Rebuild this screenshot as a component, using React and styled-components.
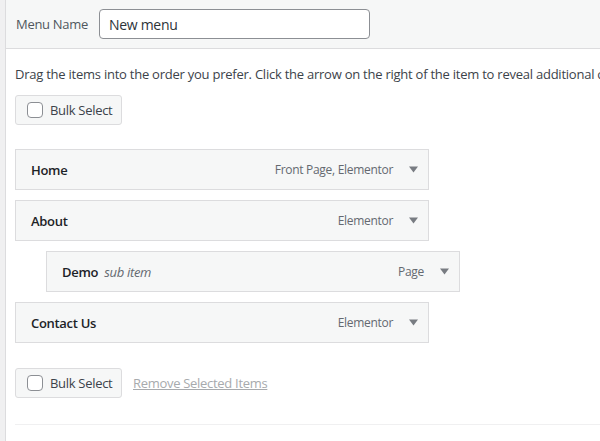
import React from "react";
import styled, { createGlobalStyle } from "styled-components";

const GlobalStyle = createGlobalStyle`
  html, body {
    margin: 0;
    padding: 0;
    background: #f0f0f1;
  }
  body {
    font-family: "Open Sans", "Noto Sans", sans-serif;
    font-size: 13px;
    color: #3c434a;
  }
`;

const Page = styled.div`
  display: flex;
  min-height: 441px;
  padding-left: 5px;
`;

const Panel = styled.div`
  flex: 1;
  background: #fff;
  border-left: 1px solid #dcdcde;
  overflow: hidden;
`;

const Header = styled.div`
  display: flex;
  align-items: center;
  height: 48px;
  padding: 0 10px;
  background: #f6f7f7;
  border-bottom: 1px solid #dcdcde;
`;

const Label = styled.label`
  color: #50575e;
  font-size: 13px;
  letter-spacing: -0.3px;
  margin-right: 11px;
`;

const NameInput = styled.input`
  box-sizing: border-box;
  width: 271px;
  height: 30px;
  padding: 0 9px;
  border: 1px solid #8c8f94;
  border-radius: 4px;
  background: #fff;
  font-family: inherit;
  font-size: 14px;
  letter-spacing: -0.3px;
  color: #2c3338;
  outline: none;
`;

const Body = styled.div`
  padding: 0 0 0 9px;
`;

const Hint = styled.p`
  margin: 15px 0 11px;
  line-height: 20px;
  white-space: nowrap;
  letter-spacing: -0.24px;
  color: #3c434a;
`;

const BulkRow = styled.div`
  display: flex;
  align-items: center;
  gap: 11px;
  margin-bottom: ${(p) => p.$after || 0}px;
`;

const BulkButton = styled.label`
  box-sizing: border-box;
  display: flex;
  align-items: center;
  gap: 7px;
  width: 107px;
  height: 30px;
  padding: 0 11px;
  background: #f6f7f7;
  border: 1px solid #dcdcde;
  border-radius: 3px;
  color: #3c434a;
  white-space: nowrap;
  letter-spacing: -0.3px;
`;

const Check = styled.span`
  box-sizing: border-box;
  width: 16px;
  height: 16px;
  border: 1px solid #8c8f94;
  border-radius: 4px;
  background: #fff;
  flex-shrink: 0;
`;

const RemoveLink = styled.span`
  color: #a7aaad;
  text-decoration: underline;
  white-space: nowrap;
  letter-spacing: -0.3px;
`;

const Items = styled.ul`
  list-style: none;
  margin: 0 0 25px;
  padding: 0;
  display: flex;
  flex-direction: column;
  gap: 10px;
`;

const ItemBar = styled.li`
  box-sizing: border-box;
  display: flex;
  align-items: center;
  width: 414px;
  height: 41px;
  margin-left: ${(p) => (p.$depth || 0) * 31}px;
  padding: 0 10px 0 15px;
  background: #f6f7f7;
  border: 1px solid #dcdcde;
`;

const Title = styled.span`
  font-weight: 600;
  color: #1d2327;
  letter-spacing: -0.3px;
`;

const SubLabel = styled.span`
  margin-left: 6px;
  font-style: italic;
  color: #646970;
  letter-spacing: -0.3px;
`;

const ItemType = styled.span`
  margin-left: auto;
  color: #646970;
  font-size: 12px;
  letter-spacing: -0.3px;
`;

const Toggle = styled.span`
  display: flex;
  align-items: center;
  margin-left: 16px;
  color: #787c82;
`;

const Footer = styled.div`
  margin-top: 26px;
  height: 20px;
  border-top: 1px solid #f0f0f1;
`;

const Arrow = () => (
  <svg width="9" height="7" viewBox="0 0 9 7">
    <polygon points="0,0.5 9,0.5 4.5,6.5" fill="currentColor" />
  </svg>
);

const items = [
  { title: "Home", type: "Front Page, Elementor" },
  { title: "About", type: "Elementor" },
  { title: "Demo", type: "Page", depth: 1, sub: "sub item" },
  { title: "Contact Us", type: "Elementor" },
];

const Bulk = () => (
  <BulkButton>
    <Check />
    Bulk Select
  </BulkButton>
);

export default function App() {
  return (
    <>
      <GlobalStyle />
      <Page>
        <Panel>
          <Header>
            <Label>Menu Name</Label>
            <NameInput defaultValue="New menu" />
          </Header>
          <Body>
            <Hint>
              Drag the items into the order you prefer. Click the arrow on the right of the item to reveal additional configuration options.
            </Hint>
            <BulkRow $after={24}>
              <Bulk />
            </BulkRow>
            <Items>
              {items.map((it) => (
                <ItemBar key={it.title} $depth={it.depth}>
                  <Title>{it.title}</Title>
                  {it.sub && <SubLabel>{it.sub}</SubLabel>}
                  <ItemType>{it.type}</ItemType>
                  <Toggle>
                    <Arrow />
                  </Toggle>
                </ItemBar>
              ))}
            </Items>
            <BulkRow>
              <Bulk />
              <RemoveLink>Remove Selected Items</RemoveLink>
            </BulkRow>
            <Footer />
          </Body>
        </Panel>
      </Page>
    </>
  );
}
